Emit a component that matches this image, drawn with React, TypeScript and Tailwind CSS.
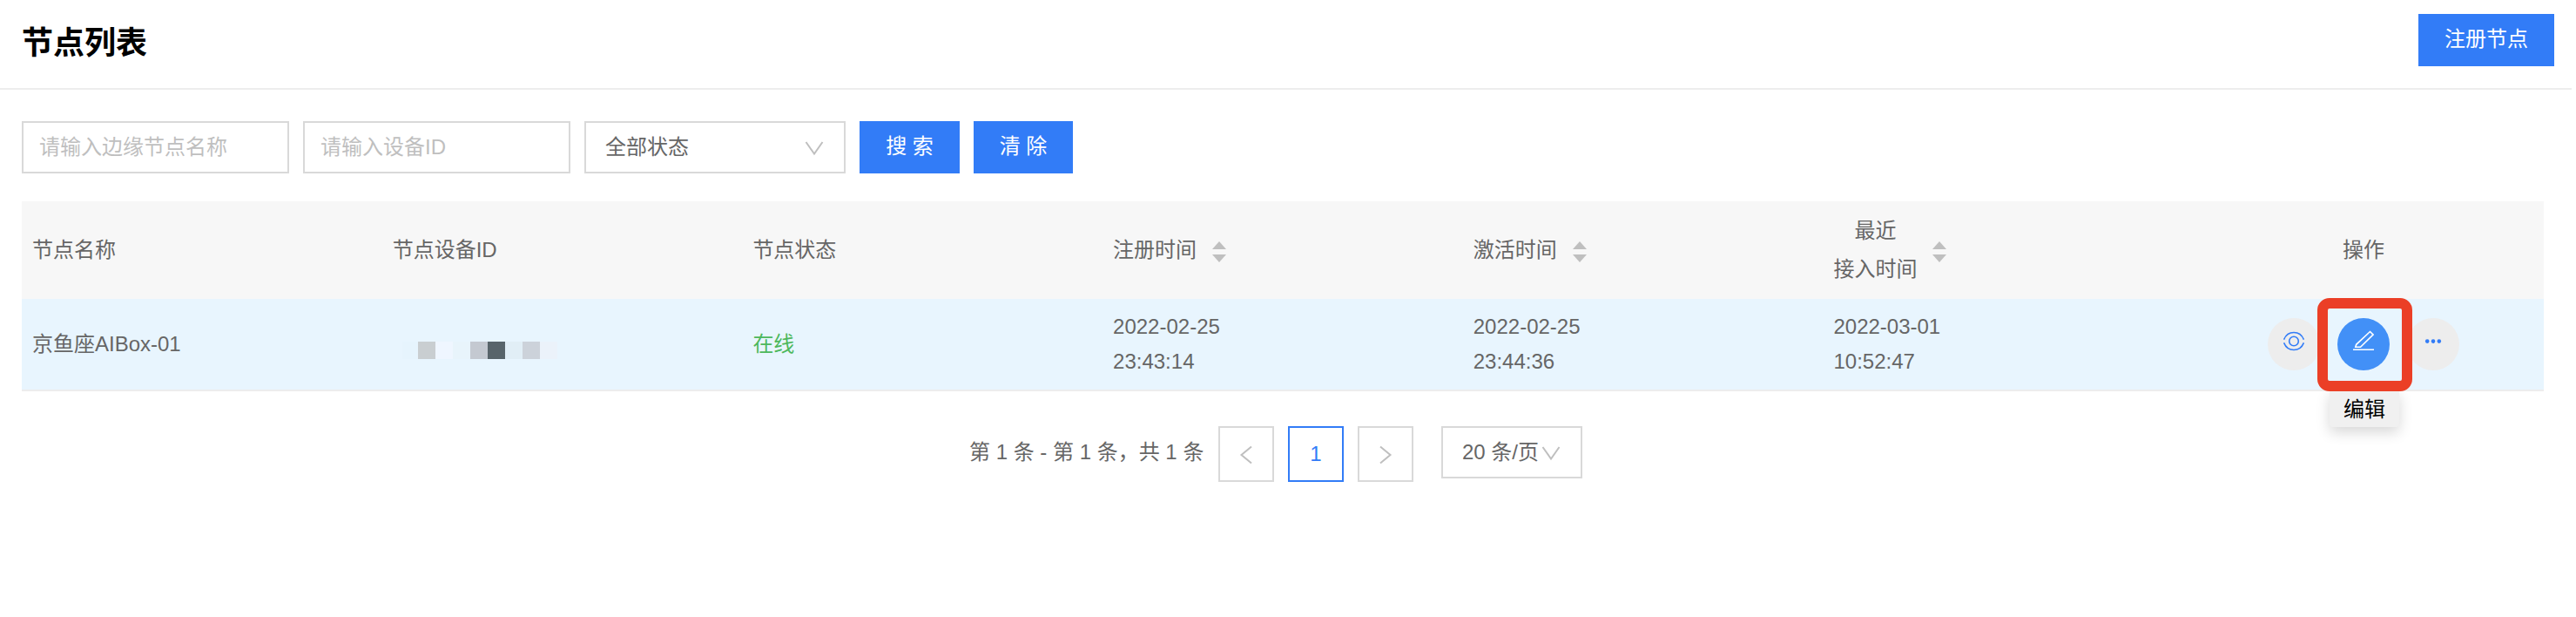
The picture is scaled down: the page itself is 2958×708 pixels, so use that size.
import React from "react";

const cell = "w-[413.7px] shrink-0 px-3";

function Sorter({ className }: { className: string }) {
  return (
    <svg width="16" height="24" viewBox="0 0 16 24" className={className} fill="#bfbfbf">
      <path d="M8 0L16 9H0Z" />
      <path d="M8 24L0 15H16Z" />
    </svg>
  );
}

function Chevron({ className, points }: { className: string; points: string }) {
  return (
    <svg width="24" height="24" viewBox="0 0 24 24" className={className} fill="none" stroke="#bfbfbf" strokeWidth="2">
      <polyline points={points} />
    </svg>
  );
}

const mosaic = [
  "w-[18px] bg-[#e6f4fd]",
  "w-5 bg-[#c9ced1]",
  "w-5 bg-[#eff6ff]",
  "w-5 bg-[#e8f4fb]",
  "w-5 bg-[#c4c9d1]",
  "w-5 bg-[#58646a]",
  "w-5 bg-[#e1eef6]",
  "w-5 bg-[#ccd2da]",
  "w-5 bg-[#ebf2fa]",
];

export default function App() {
  return (
    <div className="h-[708px] w-[2958px] overflow-hidden bg-white font-['Liberation_Sans','Noto_Sans_CJK_SC',sans-serif] text-2xl text-[#666]">
      <header className="mr-[5px] flex h-[103px] items-start justify-between border-b-2 border-[#ededed] pr-5 pl-[25px]">
        <h1 className="pt-[26px] text-[36px] leading-[48px] font-bold text-black">节点列表</h1>
        <button className="mt-4 h-[60px] w-[156px] bg-[#327cf7] pb-0.5 text-2xl text-white">注册节点</button>
      </header>

      <div className="mt-9 flex h-[60px] gap-4 pl-[25px]">
        <div className="flex w-[307px] items-center border-2 border-[#d9d9d9] pl-[18px] text-[#bfbfbf]">请输入边缘节点名称</div>
        <div className="flex w-[307px] items-center border-2 border-[#d9d9d9] pl-[18px] text-[#bfbfbf]">请输入设备ID</div>
        <div className="flex w-[300px] items-center justify-between border-2 border-[#d9d9d9] pr-[22px] pl-[22px]">
          全部状态
          <Chevron className="mt-0.5" points="2.500,5 12,18.500 21.500,5" />
        </div>
        <button className="w-[115px] bg-[#327cf7] pb-0.5 text-white">搜 索</button>
        <button className="w-[114px] bg-[#327cf7] pb-0.5 text-white">清 除</button>
      </div>

      <div className="mt-8 ml-[25px] w-[2896px]">
        <div className="flex h-[112px] items-center bg-[#f7f7f7] leading-[44px]">
          <div className={cell}>节点名称</div>
          <div className={cell}>节点设备ID</div>
          <div className={cell}>节点状态</div>
          <div className={cell + " flex items-center"}>注册时间<Sorter className="mt-1 ml-[18px]" /></div>
          <div className={cell + " flex items-center"}>激活时间<Sorter className="mt-1 ml-[18px]" /></div>
          <div className={cell + " flex items-center"}>
            <div className="text-center">最近<br />接入时间</div>
            <Sorter className="mt-1 ml-[18px]" />
          </div>
          <div className={cell + " text-center"}>操作</div>
        </div>
        <div className="flex h-[106px] items-center border-b-2 border-[#ededed] bg-[#e8f5fe] leading-10">
          <div className={cell}>京鱼座AIBox-01</div>
          <div className={cell}>
            <div className="mt-3.5 ml-[11px] flex h-5">
              {mosaic.map((c, i) => <span key={i} className={c} />)}
            </div>
          </div>
          <div className={cell + " text-[#4db85c]"}>在线</div>
          <div className={cell}>2022-02-25<br />23:43:14</div>
          <div className={cell}>2022-02-25<br />23:44:36</div>
          <div className={cell}>2022-03-01<br />10:52:47</div>
          <div className={cell + " flex justify-center gap-5"}>
            <div className="flex size-[60px] justify-center rounded-full bg-[#ededed] pt-[15px]">
              <svg width="24" height="24" viewBox="0 0 24 24" fill="none" stroke="#327cf7" strokeWidth="1.6">
                <circle cx="12" cy="11.5" r="5.3" />
                <path d="M.6 9.700C4.800-1.200 19.200-1.200 23.400 9.700M.6 13.300C4.800 24.200 19.200 24.200 23.400 13.300" />
              </svg>
            </div>
            <div className="relative size-[60px] rounded-full bg-[#4290f7]">
              <svg width="24" height="24" viewBox="0 0 24 24" fill="none" stroke="white" strokeWidth="1.6" className="mx-auto mt-[14px]">
                <path d="M0 22.200H24M2.800 19.300L3.700 16.300L19.500 1.500L23 5L8.500 19.300Z" />
              </svg>
              <div className="absolute top-[82px] left-[-9px] flex h-[43px] w-20 items-center justify-center rounded bg-[#f0f0f0] pt-0.5 text-black shadow-[0_6px_16px_rgba(0,0,0,0.16)]">编辑</div>
              <div className="absolute top-[-23px] left-[-23px] h-[107px] w-[109px] rounded-[14px] border-12 border-[#eb3f26]" />
            </div>
            <div className="flex size-[60px] justify-center rounded-full bg-[#ededed] pt-[15px]">
              <svg width="24" height="24" viewBox="0 0 24 24" fill="#327cf7">
                <circle cx="5.200" cy="11.600" r="2.3" />
                <circle cx="12" cy="11.600" r="2.3" />
                <circle cx="18.800" cy="11.600" r="2.3" />
              </svg>
            </div>
          </div>
        </div>
      </div>

      <div className="mt-10 ml-[1113px] flex items-start">
        <div className="w-[286px] pt-[11px] leading-[38px] whitespace-nowrap">第 1 条 - 第 1 条，共 1 条</div>
        <div className="flex size-16 items-center justify-center border-2 border-[#d9d9d9]"><Chevron className="mt-0.5" points="18,2.500 6.500,12 18,21.500" /></div>
        <div className="ml-4 flex size-16 items-center justify-center border-2 border-[#327cf7] text-[#327cf7]">1</div>
        <div className="ml-4 flex size-16 items-center justify-center border-2 border-[#d9d9d9]"><Chevron className="mt-0.5" points="6,2.500 17.500,12 6,21.500" /></div>
        <div className="ml-8 flex h-[60px] w-[162px] items-center border-2 border-[#d9d9d9] pl-[22px] whitespace-nowrap">
          20 条/页
          <Chevron className="mt-0.5 ml-0.5" points="2.500,5 12,18.500 21.500,5" />
        </div>
      </div>
    </div>
  );
}
